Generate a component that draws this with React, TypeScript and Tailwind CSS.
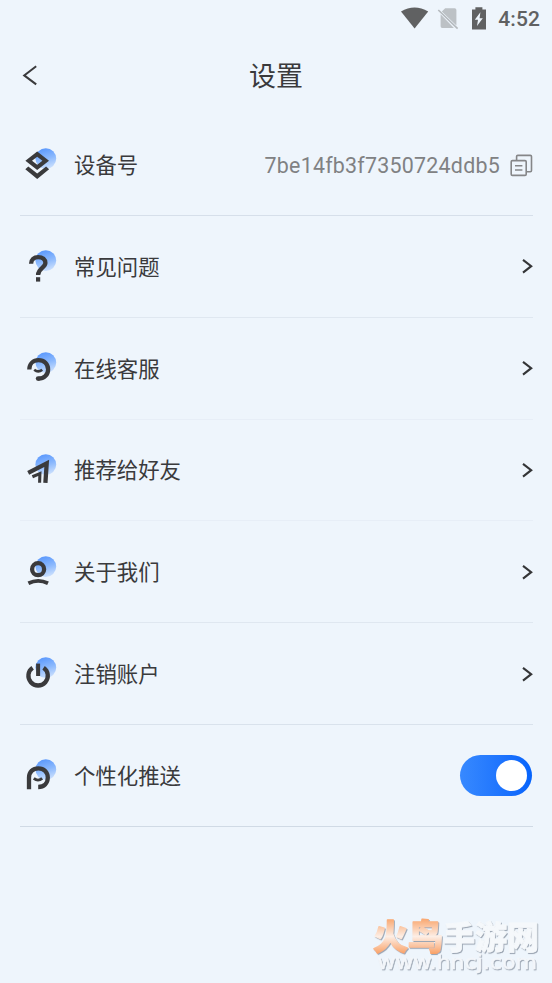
import type { ReactNode } from "react";

const INK = "#3a3a3c";

function Glyph({ id, children }: { id: string; children: ReactNode }) {
  return (
    <svg width="34" height="34" viewBox="0 0 34 34" fill="none" stroke={INK} strokeWidth="4.3" className="mt-[1.5px] shrink-0">
      <defs>
        <linearGradient id={id} x1="0.35" y1="0" x2="0.65" y2="1">
          <stop offset="0" stopColor="#5a98fd" />
          <stop offset="0.5" stopColor="#8ab8fd" />
          <stop offset="1" stopColor="#cfe2fd" />
        </linearGradient>
      </defs>
      <circle cx="21.8" cy="10.6" r="10.4" fill={`url(#${id})`} stroke="none" />
      {children}
    </svg>
  );
}

const rows = [
  {
    label: "设备号",
    line: "border-[#d6dfea]",
    kind: "device",
    icon: (
      <g fill={INK} stroke="none">
        <path fillRule="evenodd" d="M13.2 3.4 25 12.7 13.2 22 1.4 12.7ZM13.2 8.7 8 12.7 13.2 16.8 18.4 12.7Z" />
        <path d="M1.3 21.3 4.3 18.4 13.2 25.4 22.1 18.4 25.1 21.3 13.2 31Z" />
      </g>
    ),
  },
  {
    label: "常见问题",
    line: "border-[#dfe7f0]",
    kind: "link",
    icon: (
      <>
        <path d="M7.1 13.7C7.2 9.5 10 7.1 14.2 7.1c4.4 0 7.2 2.4 7.2 6 0 4.6-7.3 5.4-7.3 11.8" />
        <path d="M12 29.4h4.2" strokeWidth="4.4" />
      </>
    ),
  },
  {
    label: "在线客服",
    line: "border-[#e7eef7]",
    kind: "link",
    icon: (
      <>
        <path d="M5.3 17.4C5.3 11.8 9.2 8.2 14.6 8.2c5.6 0 9.5 3.9 9.5 9.2 0 5.4-4 9.2-9.6 9.2" />
        <circle cx="14.2" cy="26.6" r="2.4" fill={INK} stroke="none" />
        <path d="M10.2 17.8q4 3.2 8 0" strokeWidth="2.6" />
      </>
    ),
  },
  {
    label: "推荐给好友",
    line: "border-[#e7eef7]",
    kind: "link",
    icon: (
      <>
        <path d="M4.2 18.8 22.7 9.4 21.4 28.8" />
        <path d="M8.4 22.8 15.9 19.6 15.6 28.8" strokeWidth="3.1" />
      </>
    ),
  },
  {
    label: "关于我们",
    line: "border-[#dfe7f0]",
    kind: "link",
    icon: (
      <>
        <circle cx="14.1" cy="13.2" r="6" />
        <path d="M4.4 27.3q9.8-4.8 19.6 0" strokeWidth="3.8" />
      </>
    ),
  },
  {
    label: "注销账户",
    line: "border-[#d9e2ec]",
    kind: "link",
    icon: (
      <>
        <path d="M8.6 10.8a9.7 9.7 0 1 0 11 0" />
        <path d="M14.1 6.6v12.4" strokeWidth="4" />
      </>
    ),
  },
  {
    label: "个性化推送",
    line: "border-[#d0dae5]",
    kind: "switch",
    icon: (
      <>
        <path d="M5 30.2V18.6C5 12.8 8.8 9.4 14.4 9.4c5.6 0 9.4 3.9 9.4 9.2 0 5.5-3.8 9.4-9.6 9.4" />
        <path d="M9.8 19.4q4.2 3.4 8.4 0" strokeWidth="2.8" />
      </>
    ),
  },
];

function StatusBar() {
  return (
    <div className="flex h-10 items-start justify-end pr-3 text-[#606162]">
      <svg width="90" height="36" viewBox="400 0 90 36" className="mr-2">
        <path d="M401 11.6Q414.5 3.4 428.2 11.6L414.6 28.6Z" fill="#606162" />
        <path d="M445.2 8.3H454.6Q456.4 8.3 456.4 10.1V25.4L441.8 11.4ZM440.6 14.2 453.9 28H442.2Q440.6 28 440.6 26.2Z" fill="#bcc1c5" />
        <path d="M438.3 10 457.6 28.6" stroke="#b4b9bd" strokeWidth="1.6" />
        <path
          fillRule="evenodd"
          fill="#606162"
          d="M475.4 7.3h7v2.2h3.6V29.4h-14V9.5h3.4ZM480.4 12.2 474.8 19.8H478L477 26 482.8 18.2H479.6Z"
        />
      </svg>
      <span className="mt-[7px] text-[21px] leading-6 font-medium tracking-[0.1px]">4:52</span>
    </div>
  );
}

function Watermark() {
  return (
    <svg width="190" height="90" viewBox="362 893 190 90">
      <defs>
        <linearGradient id="flame" gradientUnits="userSpaceOnUse" x1="0" y1="919" x2="0" y2="954">
          <stop offset="0" stopColor="#f9a871" />
          <stop offset="0.5" stopColor="#fdeee5" />
          <stop offset="1" stopColor="#f9a065" />
        </linearGradient>
        <filter id="drop" x="-5%" y="-10%" width="115%" height="130%">
          <feDropShadow dx="0.9" dy="1.1" stdDeviation="0.7" floodColor="#8d98a6" floodOpacity="0.85" />
        </filter>
      </defs>
      <g filter="url(#drop)" fontFamily="'Noto Sans CJK SC', sans-serif" fontWeight="900" strokeLinejoin="round">
        <text x="373" y="949.5" fontSize="35" fill="url(#flame)" stroke="url(#flame)" strokeWidth="1.4">
          火鸟
        </text>
        <text x="443" y="948.5" fontSize="32" fill="#f5f8fb" stroke="#f5f8fb" strokeWidth="0.8">
          手游网
        </text>
      </g>
      <text
        x="377.5"
        y="969"
        fontSize="19"
        fontFamily="'DejaVu Sans', sans-serif"
        textLength="159.5"
        lengthAdjust="spacingAndGlyphs"
        fill="#f3f6fa"
        stroke="#f3f6fa"
        strokeWidth="0.5"
        filter="url(#drop)"
      >
        www.hncj.com
      </text>
    </svg>
  );
}

function Trailing({ kind }: { kind: string }) {
  if (kind === "device") {
    return (
      <div className="mt-[1.5px] flex items-center gap-[10px] text-[#808183]">
        <span className="mt-px text-[21.4px] leading-8 tracking-[0.24px]">7be14fb3f7350724ddb5</span>
        <svg width="23" height="23" viewBox="0 0 23 23" fill="none" stroke="#858688" strokeWidth="1.6">
          <rect x="1.2" y="6.6" width="15" height="14.8" rx="1.2" />
          <path d="M6.6 6.4V2.6q0-1.2 1.2-1.2H20.3q1.2 0 1.2 1.2V16.6q0 1.2-1.2 1.2H16.4M5 11.8h7.4M5 16h7.4" />
        </svg>
      </div>
    );
  }
  if (kind === "switch") {
    return (
      <div className="mr-px flex h-[41px] w-[72px] items-center justify-end rounded-full bg-gradient-to-r from-[#3789ff] to-[#0563fc] pr-[5px]">
        <div className="size-[31px] rounded-full bg-white" />
      </div>
    );
  }
  return (
    <svg width="12" height="16" viewBox="0 0 12 16" fill="none" stroke="#343537" strokeWidth="2.1">
      <path d="M2 1.8 10.2 8.2 2 14.6" />
    </svg>
  );
}

export default function App() {
  return (
    <div className="flex h-[983px] w-[552px] flex-col overflow-hidden bg-[#eef5fc] font-[Roboto,'Noto_Sans_CJK_SC',sans-serif] text-[#3a3a3c]">
      <StatusBar />
      <header className="grid h-[74px] grid-cols-[60px_1fr_60px] items-start">
        <svg width="16" height="22" viewBox="0 0 16 22" fill="none" stroke="#3a3a3c" strokeWidth="2" className="mt-[25px] ml-[21.5px]">
          <path d="M14.2 1.2 2.2 10.4 14.2 19.4" />
        </svg>
        <h1 className="mt-[17px] text-center text-[27px] leading-10">设置</h1>
      </header>
      <main className="pr-[19px] pl-5">
        {rows.map((row, i) => (
          <div key={row.label} className={`flex h-[101.85px] items-center border-b pl-1 ${row.line}`}>
            <Glyph id={`dot-${i}`}>{row.icon}</Glyph>
            <span className="mt-[3px] ml-4 flex-1 text-[21.4px] leading-8">{row.label}</span>
            <Trailing kind={row.kind} />
          </div>
        ))}
      </main>
      <footer className="mt-auto flex justify-end">
        <Watermark />
      </footer>
    </div>
  );
}
